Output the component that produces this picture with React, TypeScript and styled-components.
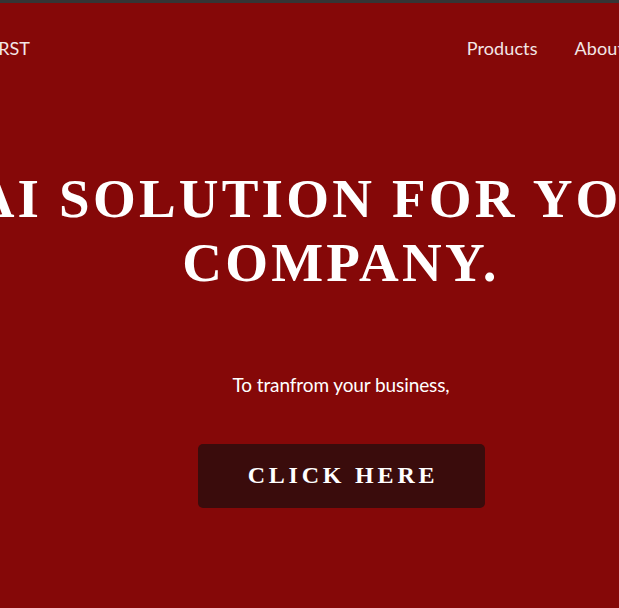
import React from "react";
import styled, { createGlobalStyle } from "styled-components";

const Global = createGlobalStyle`
  html, body { margin: 0; padding: 0; background: #850808; overflow: hidden; }
  * { box-sizing: border-box; }
`;

const Page = styled.div`
  width: 710px;
  margin-left: -14px;
  min-height: 608px;
  border-top: 3px solid #353535;
  background: #850808;
  color: #ffffff;
`;

const Header = styled.header`
  height: 90px;
  display: flex;
  align-items: center;
  justify-content: space-between;
  padding-right: 72px;
  font-family: Lato, "Noto Sans", sans-serif;
  font-size: 18px;
  color: #f3e6e6;
`;

const Logo = styled.div`
  margin-left: -3px;
`;

const Nav = styled.nav`
  display: flex;
  gap: 37px;
`;

const NavLink = styled.a`
  color: inherit;
  text-decoration: none;
  letter-spacing: 0.1px;
`;

const Hero = styled.section`
  display: flex;
  flex-direction: column;
  align-items: center;
  text-align: center;
  padding-top: 74px;
`;

const Title = styled.h1`
  margin: 0;
  font-family: "Liberation Serif", "DejaVu Serif", serif;
  font-weight: 700;
  font-size: 55px;
  line-height: 64px;
  letter-spacing: 3.2px;
  color: #ffffff;
  white-space: nowrap;
`;

const Sub = styled.p`
  margin: 79px 0 0;
  font-family: Lato, "Noto Sans", sans-serif;
  font-size: 19px;
  line-height: 1.2;
  letter-spacing: -0.1px;
  color: #ffffff;
`;

const Button = styled.button`
  margin-top: 47px;
  width: 287px;
  height: 64px;
  border: none;
  border-radius: 5px;
  background: #3a0c0c;
  color: #ffffff;
  font-family: "Liberation Serif", "DejaVu Serif", serif;
  font-weight: 700;
  font-size: 24px;
  letter-spacing: 3.8px;
  padding: 0 0 0 4px;
  cursor: pointer;
`;

export default function App() {
  return (
    <>
      <Global />
      <Page>
        <Header>
          <Logo>FIRST</Logo>
          <Nav>
            <NavLink href="#">Products</NavLink>
            <NavLink href="#">About</NavLink>
          </Nav>
        </Header>
        <Hero>
          <Title>
            AI SOLUTION FOR YOUR
            <br />
            COMPANY.
          </Title>
          <Sub>To tranfrom your business,</Sub>
          <Button>CLICK HERE</Button>
        </Hero>
      </Page>
    </>
  );
}
